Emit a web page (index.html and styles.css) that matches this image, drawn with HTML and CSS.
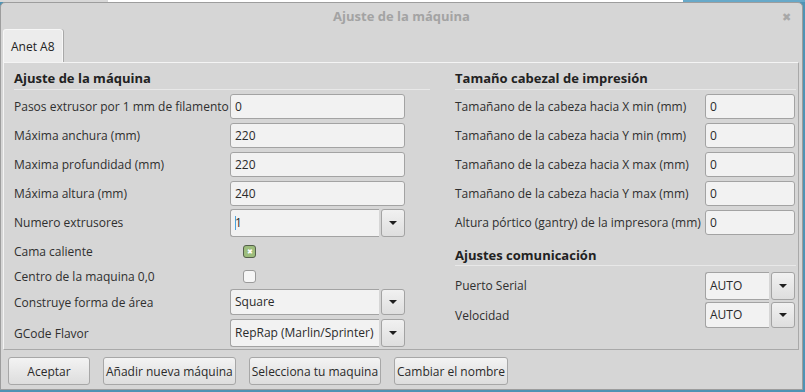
FILE: index.html
```html
<!DOCTYPE html>
<html lang="es">
<head>
    <meta charset="UTF-8">
    <title>Ajuste de la máquina</title>
    <link rel="stylesheet" href="styles.css">
</head>
<body>
    <div class="desktop-top">
        <span class="strip-gray"></span><span class="strip-white"></span><span class="strip-blue"></span>
    </div>
    <div class="window">
        <div class="titlebar">
            <span class="title">Ajuste de la máquina</span>
            <span class="close">&#x2716;</span>
        </div>

        <div class="tabs">
            <div class="tab active">Anet A8</div>
        </div>

        <div class="tab-pane">
            <div class="column left">
                <h2>Ajuste de la máquina</h2>
                <div class="form left-form">
                    <label>Pasos extrusor por 1 mm de filamento</label>
                    <div class="field"><input type="text" value="0"></div>

                    <label>Máxima anchura (mm)</label>
                    <div class="field"><input type="text" value="220"></div>

                    <label>Maxima profundidad (mm)</label>
                    <div class="field"><input type="text" value="220"></div>

                    <label>Máxima altura (mm)</label>
                    <div class="field"><input type="text" value="240"></div>

                    <label>Numero extrusores</label>
                    <div class="field combo tall">
                        <span class="combo-text caret">1</span>
                        <span class="combo-btn"><i class="arrow"></i></span>
                    </div>

                    <label>Cama caliente</label>
                    <div class="field"><span class="checkbox checked">&#x2716;</span></div>

                    <label>Centro de la maquina 0,0</label>
                    <div class="field"><span class="checkbox"></span></div>

                    <label>Construye forma de área</label>
                    <div class="field combo">
                        <span class="combo-text">Square</span>
                        <span class="combo-btn"><i class="arrow"></i></span>
                    </div>

                    <label>GCode Flavor</label>
                    <div class="field combo tall">
                        <span class="combo-text">RepRap (Marlin/Sprinter)</span>
                        <span class="combo-btn"><i class="arrow"></i></span>
                    </div>
                </div>
            </div>

            <div class="column right">
                <h2>Tamaño cabezal de impresión</h2>
                <div class="form right-form">
                    <label>Tamañano de la cabeza hacia X min (mm)</label>
                    <div class="field"><input type="text" value="0"></div>

                    <label>Tamañano de la cabeza hacia Y min (mm)</label>
                    <div class="field"><input type="text" value="0"></div>

                    <label>Tamañano de la cabeza hacia X max (mm)</label>
                    <div class="field"><input type="text" value="0"></div>

                    <label>Tamañano de la cabeza hacia Y max (mm)</label>
                    <div class="field"><input type="text" value="0"></div>

                    <label>Altura pórtico (gantry) de la impresora (mm)</label>
                    <div class="field"><input type="text" value="0"></div>
                </div>

                <h2 class="second">Ajustes comunicación</h2>
                <div class="form right-form comm">
                    <label>Puerto Serial</label>
                    <div class="field combo tall">
                        <span class="combo-text">AUTO</span>
                        <span class="combo-btn"><i class="arrow"></i></span>
                    </div>

                    <label>Velocidad</label>
                    <div class="field combo">
                        <span class="combo-text">AUTO</span>
                        <span class="combo-btn"><i class="arrow"></i></span>
                    </div>
                </div>
            </div>
        </div>

        <div class="buttons">
            <button class="btn-accept">Aceptar</button>
            <button>Añadir nueva máquina</button>
            <button>Selecciona tu maquina</button>
            <button>Cambiar el nombre</button>
        </div>
    </div>
</body>
</html>
```

FILE: styles.css
```css
body {
    margin: 0;
    width: 805px;
    height: 392px;
    overflow: hidden;
    background-color: #4f93b4;
    font-family: "Open Sans", "Noto Sans", sans-serif;
    font-size: 12px;
    color: #2f2f2f;
}
.desktop-top {
    display: flex;
    height: 2px;
}
.strip-gray {
    width: 108px;
    background-color: #d8d8d8;
}
.strip-white {
    width: 575px;
    background-color: #ffffff;
}
.strip-blue {
    flex: 1;
    background-color: #67a9c9;
}
.window {
    width: 801px;
    height: 386px;
    background-color: #d6d6d6;
    border: 1px solid #9d9d9d;
    border-radius: 5px 5px 0 0;
    display: flex;
    flex-direction: column;
}
.titlebar {
    height: 26px;
    display: flex;
    align-items: center;
    justify-content: center;
    position: relative;
}
.title {
    font-weight: bold;
    color: #a3a3a3;
    font-size: 13px;
}
.close {
    position: absolute;
    right: 11px;
    top: 6px;
    color: #a8a8a8;
    font-size: 11px;
}
.tabs {
    display: flex;
    padding-left: 2px;
}
.tab {
    height: 32px;
    padding: 0 7px;
    line-height: 33px;
    background-color: #ececec;
    border: 1px solid #f7f7f7;
    border-bottom: none;
    border-radius: 3px 3px 0 0;
    box-shadow: 1px 0 0 #a9a9a9;
    color: #222;
}
.tab-pane {
    margin: 0 3px 0 2px;
    height: 286px;
    border: 1px solid #f4f4f4;
    border-right-color: #a9a9a9;
    border-bottom-color: #a9a9a9;
    display: flex;
    padding: 0 0 0 10px;
}
.column.left {
    width: 416px;
}
.column.right {
    flex: 1;
    padding-left: 25px;
    padding-right: 2px;
}
h2 {
    margin: 0;
    padding-top: 4px;
    height: 22px;
    line-height: 22px;
    font-size: 13px;
    font-weight: bold;
    color: #222;
    border-bottom: 1px solid #e8e8e8;
}
h2.second {
    margin-top: 9px;
    padding-top: 0;
    height: 19px;
    line-height: 19px;
}
.form {
    display: grid;
    align-items: center;
    padding-top: 2px;
}
.left-form {
    grid-template-columns: 216px 175px;
    grid-template-rows: repeat(5, 29px) 28px 23px 28px 34px;
}
.right-form {
    grid-template-columns: 250px 90px;
    grid-auto-rows: 29px;
}
.right-form.comm {
    padding-top: 5px;
    grid-auto-rows: 29.5px;
}
label {
    white-space: nowrap;
}
.field {
    display: flex;
    align-items: center;
    height: 100%;
}
input {
    width: 100%;
    height: 25px;
    box-sizing: border-box;
    border: 1px solid #a3a3a3;
    border-radius: 3px;
    background-color: #f2f2f2;
    font: inherit;
    color: #2a2a2a;
    padding: 0 4px;
    margin: 0;
    outline: none;
}
.combo {
    gap: 2px;
}
.combo-text {
    flex: 1;
    height: 26px;
    line-height: 24px;
    box-sizing: border-box;
    border: 1px solid #a3a3a3;
    border-right: none;
    border-radius: 3px 0 0 3px;
    background-color: #f2f2f2;
    padding: 0 4px;
    color: #2a2a2a;
    white-space: nowrap;
    overflow: hidden;
}
.combo.tall .combo-text {
    height: 28px;
    line-height: 26px;
}
.caret::before {
    content: "";
    display: inline-block;
    width: 1px;
    height: 14px;
    margin-right: -1px;
    background-color: #4aa3df;
    vertical-align: -3px;
}
.combo-btn {
    width: 24px;
    height: 26px;
    box-sizing: border-box;
    border: 1px solid #a3a3a3;
    border-radius: 3px;
    background: linear-gradient(#f1f1f1, #dedede);
    display: flex;
    align-items: center;
    justify-content: center;
}
.combo.tall .combo-btn {
    height: 28px;
}
.arrow {
    width: 0;
    height: 0;
    border-left: 4px solid transparent;
    border-right: 4px solid transparent;
    border-top: 4px solid #1e1e1e;
}
.checkbox {
    width: 13px;
    height: 13px;
    box-sizing: border-box;
    margin-left: 13px;
    border: 1px solid #9a9a9a;
    border-radius: 3px;
    background-color: #f6f6f6;
    display: flex;
    align-items: center;
    justify-content: center;
    font-size: 7px;
    line-height: 1;
}
.checkbox.checked {
    background-color: #9dbd7d;
    border-color: #55604c;
    color: #ffffff;
}
.buttons {
    display: flex;
    gap: 13px;
    padding: 7px 0 0 7px;
}
button {
    height: 28px;
    padding: 0 2px;
    font: inherit;
    color: #2a2a2a;
    border: 1px solid #a7a7a7;
    border-radius: 3px;
    background: linear-gradient(#f3f3f3, #dddddd);
}
.btn-accept {
    width: 82px;
}
```
